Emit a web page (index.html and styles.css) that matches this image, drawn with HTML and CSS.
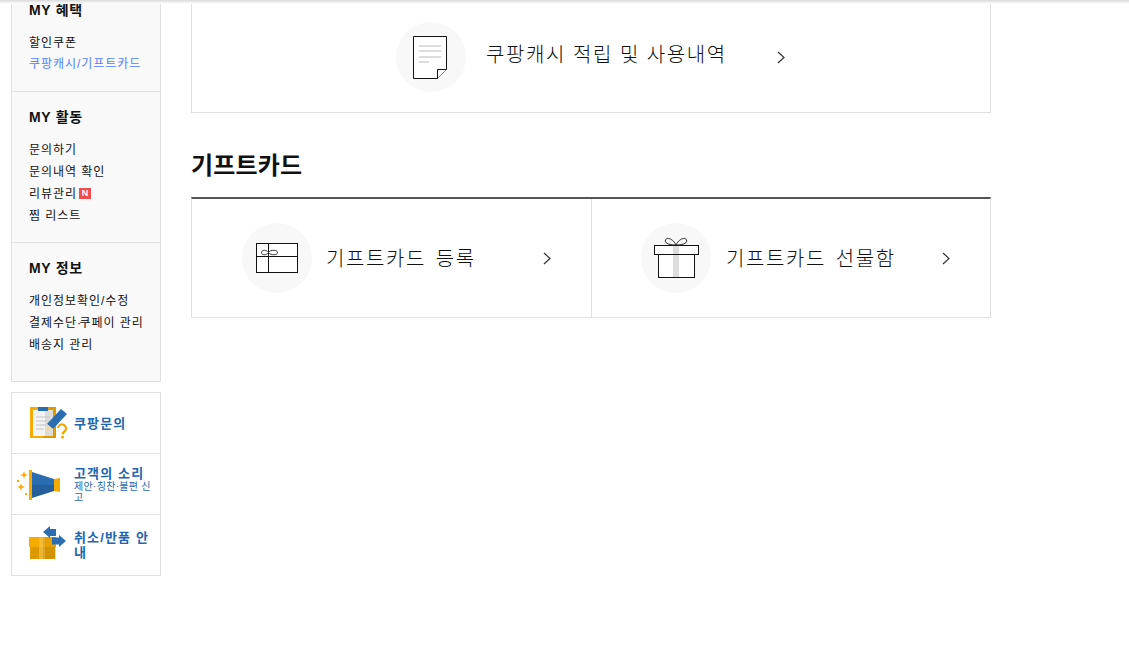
FILE: index.html
```html
<!DOCTYPE html>
<html lang="ko">
<head>
<meta charset="utf-8">
<title>쿠팡캐시/기프트카드</title>
<link rel="stylesheet" href="styles.css">
</head>
<body>
<div class="top-shadow"></div>
<div class="page">
  <aside class="side">
    <nav class="side-menu">
      <section class="side-group group-first">
        <h3 class="side-title">MY 혜택</h3>
        <ul class="side-list list-tight">
          <li>할인쿠폰</li>
          <li class="is-active">쿠팡캐시/기프트카드</li>
        </ul>
      </section>
      <section class="side-group group-second">
        <h3 class="side-title">MY 활동</h3>
        <ul class="side-list">
          <li>문의하기</li>
          <li>문의내역 확인</li>
          <li>리뷰관리<span class="badge-new">N</span></li>
          <li>찜 리스트</li>
        </ul>
      </section>
      <section class="side-group group-third">
        <h3 class="side-title">MY 정보</h3>
        <ul class="side-list">
          <li>개인정보확인/수정</li>
          <li>결제수단<span class="dot">·</span>쿠페이 관리</li>
          <li>배송지 관리</li>
        </ul>
      </section>
    </nav>
    <div class="help">
      <a class="help-row">
        <svg class="help-icon" viewBox="0 0 50 60" width="50" height="60">
          <rect x="13" y="14" width="26" height="31" fill="#f7ab00"/>
          <rect x="26" y="14" width="13" height="31" fill="#dd9a00"/>
          <rect x="16" y="17" width="20" height="26" fill="#f3f3f3"/>
          <rect x="28" y="17" width="8" height="26" fill="#dcdcdc"/>
          <path d="M19 24h14M19 28h14M19 32h10M19 36h8" stroke="#c4c4c4" stroke-width="1"/>
          <rect x="21" y="14" width="10" height="4" fill="#2a6db0"/>
          <polygon points="30,31 44,16 50,21 36,36" fill="#2a6db0"/>
          <polygon points="30,31 36,36 29,38" fill="#f0d9a0"/>
          <path d="M41 35a4 4 0 1 1 6.500 3.500c-1.500 1-2 1.500-2 3" fill="none" stroke="#f0a500" stroke-width="2.200"/>
          <rect x="44.300" y="43" width="2.500" height="2.500" fill="#f0a500"/>
        </svg>
        <span class="help-text"><strong class="help-title">쿠팡문의</strong></span>
      </a>
      <a class="help-row">
        <svg class="help-icon" viewBox="0 0 50 60" width="50" height="60">
          <rect x="12" y="16" width="3" height="30" fill="#f7ab00"/>
          <polygon points="15,18 37,25 37,31 15,31" fill="#2a6db0"/>
          <polygon points="15,31 37,31 37,37 15,44" fill="#25609c"/>
          <polygon points="37,25 43,24 43,38 37,37" fill="#f7ab00"/>
          <path d="M7 17l1 3 3 1-3 1-1 3-1-3-3-1 3-1zM4 29l1 3 3 1-3 1-1 3-1-3-3-1 3-1z" fill="#f7ab00"/>
          <rect x="0" y="26" width="2" height="2" fill="#f7ab00"/>
          <rect x="8" y="39" width="2" height="2" fill="#f7ab00"/>
        </svg>
        <span class="help-text"><strong class="help-title">고객의 소리</strong><span class="help-sub">제안·칭찬·불편 신고</span></span>
      </a>
      <a class="help-row">
        <svg class="help-icon" viewBox="0 0 50 60" width="50" height="60">
          <rect x="12" y="22" width="27" height="10" fill="#f7ab00"/>
          <rect x="13" y="32" width="25" height="12" fill="#dd9a00"/>
          <rect x="22" y="22" width="6" height="22" fill="#f3c04c" opacity=".7"/>
          <rect x="26" y="22" width="13" height="22" fill="#b87f00" opacity=".25"/>
          <polygon points="26,17 33,11 33,14 39,14 39,21 33,21 33,23" fill="#2a6db0"/>
          <polygon points="49,26 42,20 42,22.500 35,22.500 35,29.500 42,29.500 42,32" fill="#2a6db0"/>
        </svg>
        <span class="help-text"><strong class="help-title">취소/반품 안내</strong></span>
      </a>
    </div>
  </aside>

  <main class="main">
    <a class="cash-box">
      <span class="circle">
        <svg viewBox="0 0 70 70" width="70" height="70">
          <path d="M17.500 14.500h33v33l-9 9h-24z" fill="#fff" stroke="#111"/>
          <path d="M41.500 56.500v-9h9" fill="#fff" stroke="#111"/>
          <path d="M23 24h22M23 29h22M23 35h22M23 40h10" stroke="#ddd" stroke-width="2"/>
        </svg>
      </span>
      <span class="item-label cash-label">쿠팡캐시 적립 및 사용내역</span>
      <svg class="chevron" viewBox="0 0 8 13" width="8" height="13"><path d="M1 1l6 5.500-6 5.500" fill="none" stroke="#333" stroke-width="1.200"/></svg>
    </a>

    <h2 class="section-title">기프트카드</h2>

    <div class="gift-grid">
      <a class="gift-cell">
        <span class="circle">
          <svg viewBox="0 0 70 70" width="70" height="70">
            <rect x="14.500" y="20.500" width="41" height="29" fill="#fff" stroke="#111"/>
            <path d="M26.500 20.500v29M14.500 33.500h41" stroke="#111" fill="none"/>
            <path d="M26.500 29.500c-2-3-7-3-7 0s5 3 7 0c2-3 9-3 9 0s-7 3-9 0z" fill="none" stroke="#333"/>
          </svg>
        </span>
        <span class="item-label gift-label gift-label-a">기프트카드 등록</span>
        <svg class="chevron" viewBox="0 0 8 13" width="8" height="13"><path d="M1 1l6 5.500-6 5.500" fill="none" stroke="#333" stroke-width="1.200"/></svg>
      </a>
      <a class="gift-cell">
        <span class="circle">
          <svg viewBox="0 0 70 70" width="70" height="70">
            <rect x="17.500" y="31.500" width="36" height="23" fill="#fff" stroke="#111"/>
            <rect x="32" y="32" width="6" height="22" fill="#ddd"/>
            <rect x="13.500" y="22.500" width="44" height="9" fill="#fff" stroke="#111"/>
            <rect x="32" y="23" width="6" height="8" fill="#ddd"/>
            <path d="M35 22c-2-5-9-9-10.500-5s6 5 10.500 5c4.500 0 12-1 10.500-5s-8.500 0-10.500 5z" fill="none" stroke="#222"/>
          </svg>
        </span>
        <span class="item-label gift-label gift-label-b">기프트카드 선물함</span>
        <svg class="chevron" viewBox="0 0 8 13" width="8" height="13"><path d="M1 1l6 5.500-6 5.500" fill="none" stroke="#333" stroke-width="1.200"/></svg>
      </a>
    </div>
  </main>
</div>
</body>
</html>
```
FILE: styles.css
```css
* { box-sizing: border-box; }
html, body { margin: 0; padding: 0; background: #fff; height: 100%; overflow: hidden; }
body {
  font-family: "Liberation Sans", "Noto Sans CJK KR", sans-serif;
  color: #111;
}
ul { list-style: none; margin: 0; padding: 0; }
h2, h3 { margin: 0; }

.top-shadow {
  position: absolute;
  top: 0; left: 0; right: 0;
  height: 4px;
  background: linear-gradient(#d9d9d9, #f2f2f2 60%, #fff);
}

.page { display: flex; align-items: flex-start; padding-left: 11px; }

.side { width: 150px; flex: none; }
.side-menu {
  background: #f9f9f9;
  border: 1px solid #e0e0e0;
  border-top: 0;
}
.side-group { padding-left: 17px; border-bottom: 1px solid #e0e0e0; }
.side-group:last-child { border-bottom: 0; }
.group-first { padding-top: 0; padding-bottom: 16px; }
.group-second { padding-top: 15px; padding-bottom: 15px; }
.group-third { padding-top: 15px; padding-bottom: 25px; }

.side-title { font-size: 14px; line-height: 20px; font-weight: 700; margin-bottom: 12px; letter-spacing: .7px; }
.group-first .side-title { margin-bottom: 13px; }
.side-list li { font-size: 12px; line-height: 22px; white-space: nowrap; letter-spacing: .95px; color: #111; }
.list-tight li { line-height: 21px; }
.side-list .is-active { color: #346aff; opacity: .85; }
.side-list .dot { letter-spacing: -1.500px; }
.badge-new {
  display: inline-block;
  width: 12px; height: 11px;
  margin-left: 2px;
  background: #ef4d4d;
  color: #fff;
  font-size: 9px; line-height: 11px;
  font-weight: 700;
  text-align: center;
  letter-spacing: 0;
  vertical-align: 2px;
}

.help { margin-top: 10px; border: 1px solid #e0e0e0; background: #fff; }
.help-row {
  display: flex;
  align-items: center;
  height: 61px;
  padding-left: 5px;
  border-bottom: 1px solid #e0e0e0;
}
.help-row:last-child { height: 60px; border-bottom: 0; }
.help-icon { flex: none; margin-right: 7px; }
.help-text { display: block; width: 80px; color: #1f66b0; word-break: break-all; }
.help-title { display: block; font-size: 13px; line-height: 15px; font-weight: 700; letter-spacing: 1.150px; }
.help-sub { display: block; font-size: 10px; line-height: 11px; letter-spacing: .3px; }

.main { width: 800px; flex: none; margin-left: 30px; }

.cash-box {
  display: flex;
  align-items: center;
  height: 113px;
  padding: 2px 0 0 204px;
  border: 1px solid #e0e0e0;
  border-top: 0;
}
.circle {
  display: block;
  flex: none;
  width: 70px; height: 70px;
  border-radius: 50%;
  background: #f8f8f8;
}
.circle svg { display: block; }
.item-label {
  display: block;
  flex: none;
  font-size: 20px;
  font-weight: 300;
  line-height: 28px;
  letter-spacing: 1.600px;
  color: #111;
  white-space: nowrap;
}
.cash-label { width: 291px; margin-left: 20px; margin-bottom: 4px; word-spacing: -.2px; }
.gift-label { word-spacing: 2.500px; margin-top: 2px; }
.gift-label-a { width: 217px; margin-left: 14px; }
.gift-label-b { width: 216px; margin-left: 15px; }
.chevron { display: block; flex: none; }

.section-title {
  font-size: 24px;
  line-height: 32px;
  font-weight: 700;
  letter-spacing: .2px;
  margin-top: 37px;
  margin-bottom: 15px;
  color: #111;
}

.gift-grid {
  display: grid;
  grid-template-columns: 399px 1fr;
  border-top: 2px solid #555;
  border-left: 1px solid #e0e0e0;
  border-right: 1px solid #e0e0e0;
  border-bottom: 1px solid #e0e0e0;
}
.gift-cell {
  display: flex;
  align-items: center;
  height: 118px;
  padding-left: 50px;
}
.gift-cell + .gift-cell { border-left: 1px solid #e0e0e0; padding-left: 49px; }
```
